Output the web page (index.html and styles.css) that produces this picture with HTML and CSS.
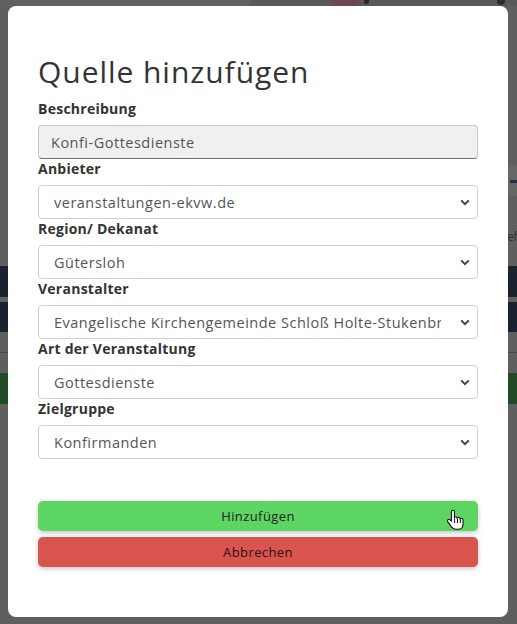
FILE: index.html
```html
<!DOCTYPE html>
<html lang="de">
<head>
<meta charset="utf-8">
<title>Quelle hinzufügen</title>
<link rel="stylesheet" href="styles.css">
</head>
<body>
<div class="backdrop">
  <div class="bg-top">
    <span class="bg-pic"></span>
    <span class="bg-dot"></span>
    <span class="bg-icon"></span>
  </div>
  <div class="bg-dash-row"><span class="bg-dash"></span></div>
  <div class="bg-text-row"><span class="bg-text">ef</span></div>
  <div class="band band-dark band-1"></div>
  <div class="band band-dark band-2"></div>
  <div class="band-line"></div>
  <div class="band band-green"></div>
</div>

<div class="modal">
  <h1 class="title">Quelle hinzufügen</h1>
  <form class="form">
    <div class="group">
      <label class="label">Beschreibung</label>
      <input class="input" type="text" value="Konfi-Gottesdienste" readonly>
    </div>
    <div class="group">
      <label class="label">Anbieter</label>
      <select class="select"><option>veranstaltungen-ekvw.de</option></select>
    </div>
    <div class="group">
      <label class="label">Region/ Dekanat</label>
      <select class="select"><option>Gütersloh</option></select>
    </div>
    <div class="group">
      <label class="label">Veranstalter</label>
      <select class="select"><option>Evangelische Kirchengemeinde Schloß Holte-Stukenbrock</option></select>
    </div>
    <div class="group">
      <label class="label">Art der Veranstaltung</label>
      <select class="select"><option>Gottesdienste</option></select>
    </div>
    <div class="group">
      <label class="label">Zielgruppe</label>
      <select class="select"><option>Konfirmanden</option></select>
    </div>
    <div class="actions">
      <button type="button" class="btn btn-add">Hinzufügen</button>
      <button type="button" class="btn btn-cancel">Abbrechen</button>
      <svg class="cursor" width="18" height="23" viewBox="0 0 18 23" aria-hidden="true">
        <path d="M6 1.2c-.9 0-1.6.7-1.6 1.6v9.4l-1.3-1.4c-.6-.7-1.7-.7-2.3 0-.6.6-.6 1.5 0 2.1l3.7 4.9c1 1.3 2.5 2.5 4.6 2.5h2.1c2.7 0 4.8-2.1 4.8-4.8v-4.8c0-.8-.6-1.5-1.5-1.5-.8 0-1.4.6-1.4 1.5v-.9c0-.8-.6-1.5-1.5-1.5-.8 0-1.4.6-1.4 1.5v-.6c0-.8-.6-1.5-1.5-1.5-.7 0-1.3.5-1.3 1.3V2.8c0-.9-.7-1.6-1.4-1.6z" fill="#fff" stroke="#111" stroke-width="1.1" stroke-linejoin="round"/>
        <path d="M7.6 9.5v4.5M10.5 9.8v4.2M13.4 11v3" stroke="#111" stroke-width="1" fill="none"/>
      </svg>
    </div>
  </form>
</div>
</body>
</html>
```

FILE: styles.css
```css
html, body {
  margin: 0;
  padding: 0;
}

body {
  width: 517px;
  height: 624px;
  overflow: hidden;
  background: #5f5f5f;
  font-family: "Open Sans", "Liberation Sans", sans-serif;
  position: relative;
}

/* dimmed page behind the modal */
.backdrop {
  display: flex;
  flex-direction: column;
}

.bg-top {
  height: 6px;
  display: flex;
  align-items: flex-start;
  background: linear-gradient(to right, #616161 0 250px, #595959 250px);
}

.bg-pic {
  width: 30px;
  height: 6px;
  margin-left: 330px;
  background: #6d4652;
  border-radius: 0 0 8px 8px;
}

.bg-dot {
  width: 5px;
  height: 4px;
  margin-left: 4px;
  background: #262626;
  border-radius: 0 0 3px 3px;
}

.bg-icon {
  width: 8px;
  height: 5px;
  margin-left: 128px;
  background: #2e2e2e;
  border-radius: 0 0 4px 4px;
}

.bg-dash-row {
  height: 30px;
  margin-top: 160px;
  display: flex;
  justify-content: flex-end;
  align-items: center;
  background: linear-gradient(to right, #5f5f5f 0 508px, #666 508px);
}

.bg-dash {
  width: 7px;
  height: 3px;
  background: #243040;
}

.bg-text-row {
  height: 22px;
  margin-top: 30px;
  display: flex;
  justify-content: flex-end;
  overflow: hidden;
}

.bg-text {
  font-size: 12px;
  line-height: 22px;
  color: #303030;
  margin-right: 0;
  letter-spacing: -0.5px;
}

.band {
  width: 100%;
}

.band-dark {
  height: 31px;
  background: #1a2230;
}

.band-1 {
  margin-top: 18px;
}

.band-2 {
  margin-top: 5px;
  height: 30px;
}

.band-line {
  height: 1px;
  margin-top: 20px;
  background: #474747;
}

.band-green {
  margin-top: 20px;
  height: 31px;
  background: #224a27;
}

/* modal */
.modal {
  position: absolute;
  top: 6px;
  left: 8px;
  width: 500px;
  height: 611px;
  box-sizing: border-box;
  padding: 48px 30px 0;
  background: #fff;
  border-radius: 8px;
}

.title {
  margin: 0 0 9px;
  font-size: 30px;
  line-height: 36px;
  font-weight: 400;
  color: #333;
  letter-spacing: 0.95px;
}

.form {
  display: flex;
  flex-direction: column;
}

.group {
  display: flex;
  flex-direction: column;
}

.label {
  font-size: 14px;
  line-height: 20px;
  font-weight: 700;
  color: #333;
  margin-bottom: 6px;
  letter-spacing: 0.25px;
}

.input,
.select {
  box-sizing: border-box;
  width: 440px;
  height: 34px;
  margin: 0;
  font-family: inherit;
  font-size: 14.5px;
  letter-spacing: 0.5px;
  color: #555;
  border: 1px solid #cfcfcf;
  border-radius: 4px;
  outline: none;
}

.input {
  padding: 0 12px;
  background: #f0f0f0;
  border-color: #c8c8c8 #c8c8c8 #6e6e6e;
}

.select {
  appearance: none;
  -webkit-appearance: none;
  padding: 0 36px 0 15px;
  background: #fff url("data:image/svg+xml,%3Csvg xmlns='http://www.w3.org/2000/svg' width='10' height='7' viewBox='0 0 10 7'%3E%3Cpath d='M1.2 1.4 5 5.2l3.8-3.8' fill='none' stroke='%23444' stroke-width='2'/%3E%3C/svg%3E") no-repeat right 7px center;
  text-overflow: clip;
  white-space: nowrap;
}

.actions {
  position: relative;
  display: flex;
  flex-direction: column;
  gap: 6px;
  margin-top: 42px;
}

.btn {
  width: 440px;
  height: 30px;
  border: none;
  border-radius: 5px;
  font-family: inherit;
  font-size: 13px;
  letter-spacing: 0.4px;
  color: #222;
  box-shadow: 0 2px 5px rgba(0, 0, 0, 0.22);
  cursor: pointer;
}

.btn-add {
  background: #5cd563;
}

.btn-cancel {
  background: #d9534f;
  color: #2a1212;
}

.cursor {
  position: absolute;
  left: 409px;
  top: 8px;
}
```
